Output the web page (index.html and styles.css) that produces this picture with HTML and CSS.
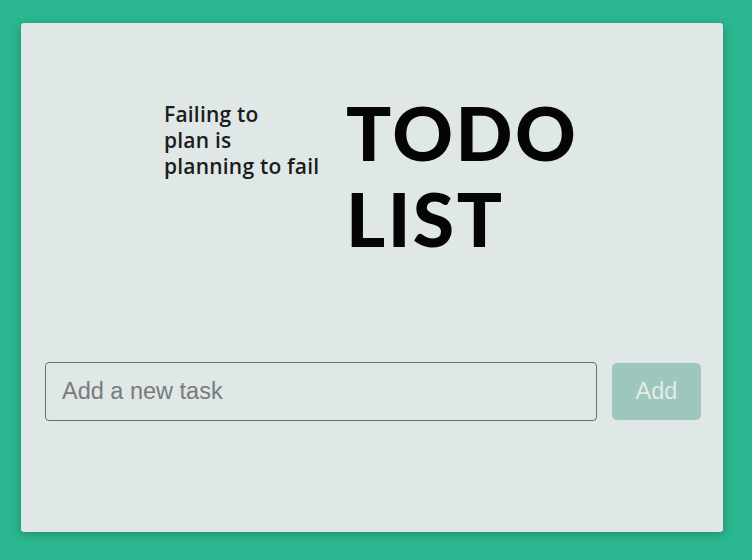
FILE: index.html
```html
<!DOCTYPE html>
<html>
<head>
<meta charset="utf-8">
<link rel="stylesheet" href="styles.css">
</head>
<body>
<main class="card">
  <header class="hero">
    <p class="motto">Failing to<br>plan is<br>planning to fail</p>
    <h1 class="title">TODO<br>LIST</h1>
  </header>
  <form class="task-form">
    <input class="task-input" type="text" placeholder="Add a new task">
    <button class="add-btn" type="button">Add</button>
  </form>
</main>
</body>
</html>
```
FILE: styles.css
```css
html, body {
  margin: 0;
  padding: 0;
}
body {
  background: #2ab68f;
  width: 752px;
  height: 560px;
  overflow: hidden;
  font-family: "Liberation Sans", Arial, sans-serif;
}
.card {
  box-sizing: border-box;
  width: 702px;
  height: 509px;
  margin: 23px 0 0 21px;
  background: #e0e7e7;
  border-radius: 3px;
  box-shadow: 0 2px 8px rgba(0, 0, 0, 0.25);
  padding: 66px 22px 0 24px;
}
.hero {
  display: flex;
  justify-content: center;
  align-items: flex-start;
  gap: 24px;
  padding-right: 4px;
}
.motto {
  margin: 12px 0 0;
  width: 158px;
  white-space: nowrap;
  font-family: "Open Sans", sans-serif;
  font-weight: 600;
  font-size: 21px;
  letter-spacing: 0.2px;
  line-height: 26px;
  color: #1c1c1c;
}
.title {
  margin: 0;
  width: 232px;
  font-family: Lato, sans-serif;
  font-weight: 900;
  font-size: 75px;
  letter-spacing: 2.5px;
  line-height: 86px;
  color: #050505;
}
.task-form {
  display: flex;
  align-items: center;
  gap: 15px;
  margin-top: 101px;
}
.task-input {
  box-sizing: border-box;
  width: 552px;
  height: 59px;
  border: 1px solid #5c7573;
  border-radius: 4px;
  background: transparent;
  padding: 0 16px;
  font-family: "Liberation Sans", Arial, sans-serif;
  font-size: 23.5px;
  color: #333;
  outline: none;
}
.task-input::placeholder {
  color: #777b7b;
}
.add-btn {
  width: 89px;
  height: 57px;
  border: none;
  border-radius: 5px;
  background: #9dc6bc;
  color: #e2ece9;
  font-family: "Liberation Sans", Arial, sans-serif;
  font-size: 23.5px;
  padding: 0;
}
```
